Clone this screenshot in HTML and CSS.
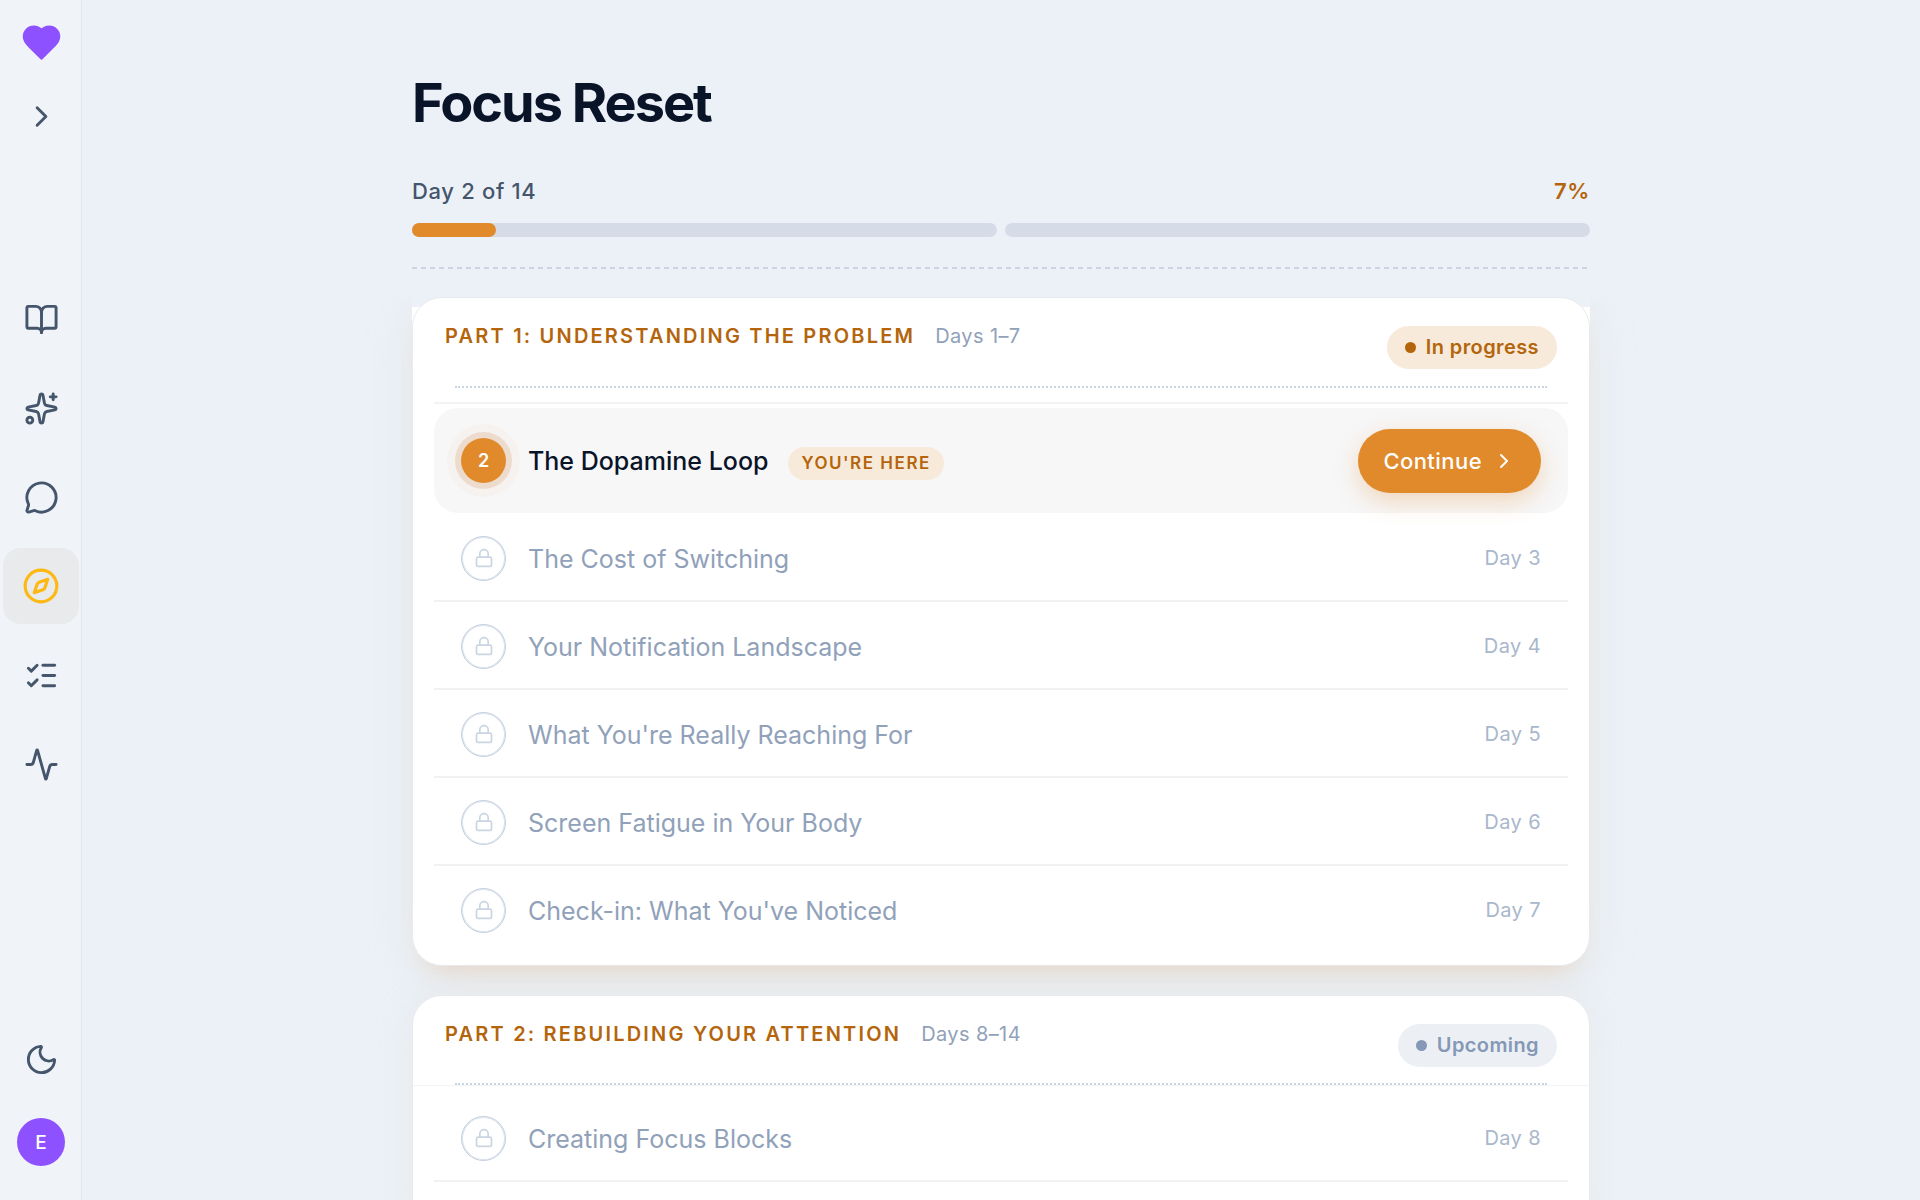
FILE: index.html
```html
<!DOCTYPE html>
<html lang="en">
<head>
  <meta charset="UTF-8">
  <meta name="viewport" content="width=device-width, initial-scale=1.0">
  <title>Focus Reset</title>
  <link rel="stylesheet" href="styles.css">
</head>
<body>

  <svg class="sprite" aria-hidden="true">
    <symbol id="lock" viewBox="0 0 24 24">
      <rect x="3" y="11" width="18" height="11" rx="2"/>
      <path d="M7 11V7a5 5 0 0 1 10 0v4"/>
    </symbol>
    <symbol id="chevron" viewBox="0 0 24 24">
      <path d="m9 18 6-6-6-6"/>
    </symbol>
  </svg>

  <aside class="sidebar">
    <a href="#" class="logo" aria-label="Home">
      <svg class="icon" viewBox="0 0 24 24"><path d="M19 14c1.49-1.46 3-3.21 3-5.5A5.5 5.5 0 0 0 16.5 3c-1.76 0-3 .5-4.5 2-1.5-1.5-2.74-2-4.5-2A5.5 5.5 0 0 0 2 8.5c0 2.3 1.5 4.05 3 5.5l7 7Z"/></svg>
    </a>
    <button class="expand" type="button" aria-label="Expand sidebar">
      <svg class="icon"><use href="#chevron"/></svg>
    </button>

    <nav>
      <a href="#" aria-label="Library">
        <svg class="icon" viewBox="0 0 24 24"><path d="M12 7v14"/><path d="M3 18a1 1 0 0 1-1-1V4a1 1 0 0 1 1-1h5a4 4 0 0 1 4 4 4 4 0 0 1 4-4h5a1 1 0 0 1 1 1v13a1 1 0 0 1-1 1h-6a3 3 0 0 0-3 3 3 3 0 0 0-3-3z"/></svg>
      </a>
      <a href="#" aria-label="Discover">
        <svg class="icon" viewBox="0 0 24 24"><path d="M11.017 2.814a1 1 0 0 1 1.966 0l1.051 5.558a2 2 0 0 0 1.594 1.594l5.558 1.051a1 1 0 0 1 0 1.966l-5.558 1.051a2 2 0 0 0-1.594 1.594l-1.051 5.558a1 1 0 0 1-1.966 0l-1.051-5.558a2 2 0 0 0-1.594-1.594l-5.558-1.051a1 1 0 0 1 0-1.966l5.558-1.051a2 2 0 0 0 1.594-1.594z"/><path d="M20 2v4"/><path d="M22 4h-4"/><circle cx="4" cy="20" r="2"/></svg>
      </a>
      <a href="#" aria-label="Chat">
        <svg class="icon" viewBox="0 0 24 24"><path d="M2.992 16.342a2 2 0 0 1 .094 1.167l-1.065 3.29a1 1 0 0 0 1.236 1.168l3.413-.998a2 2 0 0 1 1.099.092 10 10 0 1 0-4.777-4.719"/></svg>
      </a>
      <a href="#" class="active" aria-label="Programs" aria-current="page">
        <svg class="icon" viewBox="0 0 24 24"><circle cx="12" cy="12" r="10"/><path d="m16.24 7.76-1.804 5.411a2 2 0 0 1-1.265 1.265L7.76 16.24l1.804-5.411a2 2 0 0 1 1.265-1.265z"/></svg>
      </a>
      <a href="#" aria-label="Tasks">
        <svg class="icon" viewBox="0 0 24 24"><path d="M13 5h8"/><path d="M13 12h8"/><path d="M13 19h8"/><path d="m3 17 2 2 4-4"/><path d="m3 7 2 2 4-4"/></svg>
      </a>
      <a href="#" aria-label="Activity">
        <svg class="icon" viewBox="0 0 24 24"><path d="M22 12h-2.48a2 2 0 0 0-1.93 1.46l-2.35 8.36a.25.25 0 0 1-.48 0L9.24 2.18a.25.25 0 0 0-.48 0l-2.35 8.36A2 2 0 0 1 4.49 12H2"/></svg>
      </a>
    </nav>

    <button class="theme" type="button" aria-label="Dark mode">
      <svg class="icon" viewBox="0 0 24 24"><path d="M20.985 12.486a9 9 0 1 1-9.473-9.472c.405-.022.617.46.402.803a6 6 0 0 0 8.268 8.268c.344-.215.825-.004.803.401"/></svg>
    </button>
    <button class="avatar" type="button">E</button>
  </aside>

  <main>
    <div class="content">
      <h1>Focus Reset</h1>

      <div class="progress-label">
        <span>Day 2 of 14</span>
        <span class="percent">7%</span>
      </div>
      <div class="progress">
        <div class="track"><div class="fill" style="width: 14.28%"></div></div>
        <div class="track"></div>
      </div>

      <div class="divider"></div>

      <section class="part current">
        <div class="panel">
          <header>
            <h2>Part 1: Understanding the Problem</h2>
            <span class="range">Days 1–7</span>
            <span class="status">In progress</span>
          </header>
          <ol>
            <li class="today">
              <div class="lesson">
                <span class="marker">2</span>
                <span class="name">The Dopamine Loop</span>
                <span class="here">You're here</span>
                <button class="continue" type="button">Continue <svg class="icon"><use href="#chevron"/></svg></button>
              </div>
            </li>
            <li class="locked">
              <span class="marker"><svg class="icon"><use href="#lock"/></svg></span>
              <span class="name">The Cost of Switching</span>
              <span class="day">Day 3</span>
            </li>
            <li class="locked">
              <span class="marker"><svg class="icon"><use href="#lock"/></svg></span>
              <span class="name">Your Notification Landscape</span>
              <span class="day">Day 4</span>
            </li>
            <li class="locked">
              <span class="marker"><svg class="icon"><use href="#lock"/></svg></span>
              <span class="name">What You're Really Reaching For</span>
              <span class="day">Day 5</span>
            </li>
            <li class="locked">
              <span class="marker"><svg class="icon"><use href="#lock"/></svg></span>
              <span class="name">Screen Fatigue in Your Body</span>
              <span class="day">Day 6</span>
            </li>
            <li class="locked">
              <span class="marker"><svg class="icon"><use href="#lock"/></svg></span>
              <span class="name">Check-in: What You've Noticed</span>
              <span class="day">Day 7</span>
            </li>
          </ol>
        </div>
      </section>

      <section class="part upcoming">
        <div class="panel">
          <header>
            <h2>Part 2: Rebuilding Your Attention</h2>
            <span class="range">Days 8–14</span>
            <span class="status">Upcoming</span>
          </header>
          <ol>
            <li class="locked">
              <span class="marker"><svg class="icon"><use href="#lock"/></svg></span>
              <span class="name">Creating Focus Blocks</span>
              <span class="day">Day 8</span>
            </li>
          </ol>
        </div>
      </section>
    </div>
  </main>

</body>
</html>
```
FILE: styles.css
```css
* {
  box-sizing: border-box;
}
body {
  margin: 0;
  height: 100vh;
  display: flex;
  overflow: hidden;
  background: #ecf1f8;
  color: #0a1428;
  font-family: Inter, "Liberation Sans", sans-serif;
}
h1, h2, ol {
  margin: 0;
  padding: 0;
}
button {
  border: none;
  padding: 0;
  background: none;
  color: inherit;
  font-family: inherit;
  cursor: pointer;
}
.sprite {
  display: none;
}
.icon {
  display: block;
  fill: none;
  stroke: currentColor;
  stroke-width: 2;
  stroke-linecap: round;
  stroke-linejoin: round;
}

/* sidebar */
.sidebar {
  width: 82px;
  flex-shrink: 0;
  display: flex;
  flex-direction: column;
  align-items: center;
  padding: 22px 0 34px 1px;
  background: #f0f4f8;
  border-right: 1px solid #e3e5e8;
  color: #45556c;
}
.sidebar .icon {
  width: 35px;
  height: 35px;
}
.sidebar .logo .icon {
  width: 41px;
  height: 41px;
  fill: #8e51ff;
  color: #8e51ff;
}
.expand {
  margin-top: 36px;
}
nav {
  display: flex;
  flex-direction: column;
  gap: 13px;
  margin-top: 147px;
}
nav a {
  width: 76px;
  height: 76px;
  display: flex;
  align-items: center;
  justify-content: center;
  border-radius: 18px;
  color: inherit;
}
nav a.active {
  background: #e8eaec;
  color: #fdb813;
}
.sidebar nav a.active .icon {
  width: 38px;
  height: 38px;
}
.theme {
  margin-top: auto;
}
.avatar {
  width: 48px;
  height: 48px;
  margin-top: 41px;
  border-radius: 50%;
  background: #8e51ff;
  color: #fff;
  font-size: 19px;
  font-weight: 500;
}

/* page */
main {
  flex: 1;
  padding: 70px 40px 0;
}
.content {
  max-width: 1178px;
  margin: 0 auto;
}
h1 {
  font-size: 54px;
  line-height: 66px;
  font-weight: 700;
  letter-spacing: -2px;
}
.progress-label {
  display: flex;
  justify-content: space-between;
  margin-top: 41px;
  font-size: 22px;
  line-height: 28px;
  font-weight: 500;
  letter-spacing: 0.03em;
  color: #45556c;
}
.percent {
  font-weight: 600;
  color: #b4650c;
}
.progress {
  display: flex;
  gap: 8px;
  margin-top: 18px;
}
.track {
  flex: 1;
  height: 14px;
  border-radius: 7px;
  background: #d6dce7;
}
.fill {
  height: 100%;
  border-radius: 7px;
  background: #e08a2b;
}
.divider {
  height: 2px;
  margin: 30px 0 28px;
  background: repeating-linear-gradient(90deg, #ccd4e2 0 5px, transparent 5px 9px);
}

/* parts */
.part {
  position: relative;
  margin-bottom: 29px;
  border-radius: 30px;
  box-shadow: 0 2px 40px rgba(205, 200, 160, 0.16);
}
.part.current {
  box-shadow: 0 16px 24px -16px rgba(230, 130, 60, 0.26), 0 8px 48px rgba(208, 195, 165, 0.22);
  clip-path: inset(0 -80px -80px);
}
/* backdrop that squares off the top corners of the current part */
.part.current::before {
  content: "";
  position: absolute;
  inset: 0 0 auto;
  height: 40px;
  background: linear-gradient(#ecf1f8 10px, #fff 10px);
}
.panel {
  position: relative;
  background: #fff;
  border: 1px solid #e9eaec;
  border-radius: 30px;
}
.panel header {
  position: relative;
  display: flex;
  align-items: flex-start;
  height: 90px;
  padding: 26px 32px 0;
}
.panel header::after {
  content: "";
  position: absolute;
  left: 42px;
  right: 42px;
  bottom: 0;
  border-bottom: 2px dotted #cad5e2;
}
h2 {
  font-size: 20px;
  line-height: 24px;
  font-weight: 600;
  letter-spacing: 0.11em;
  text-transform: uppercase;
  color: #b4650c;
}
.range {
  margin-left: 20px;
  font-size: 20px;
  line-height: 24px;
  letter-spacing: 0.02em;
  color: #90a1b9;
}
.status {
  display: flex;
  align-items: center;
  gap: 10px;
  margin: 2px 0 0 auto;
  padding: 0 18px;
  border-radius: 22px;
  background: #f7eadb;
  color: #b4650c;
  font-size: 20px;
  line-height: 43px;
  font-weight: 600;
  letter-spacing: 0.02em;
}
.status::before {
  content: "";
  width: 11px;
  height: 11px;
  border-radius: 50%;
  background: currentColor;
}
.upcoming .panel header {
  border-bottom: 1px solid #f3f4f6;
}
.upcoming .status {
  background: #ecf0f5;
  color: #8598b5;
}
ol {
  list-style: none;
  padding: 0 21px 11px;
}
.current ol {
  padding-top: 14px;
}
.upcoming ol {
  padding: 8px 21px 60px;
}
.today {
  padding: 4px 0 1px;
  border-top: 2px solid #f3f3f4;
}
.lesson,
.locked {
  display: flex;
  align-items: center;
  padding: 0 27px;
}
.lesson {
  height: 105px;
  border-radius: 24px;
  background: #f7f7f8;
}
.locked {
  height: 88px;
  padding-top: 2px;
  border-bottom: 2px solid #f1f1f3;
}
.current .locked:last-child {
  border-color: transparent;
}
.marker {
  width: 45px;
  height: 45px;
  display: flex;
  align-items: center;
  justify-content: center;
  flex-shrink: 0;
  margin-right: 22px;
  border-radius: 50%;
}
.locked .marker {
  border: 1px solid #c3cfdf;
  box-shadow: inset 0 0 0 1px #dbe3ed;
  color: #cad5e2;
}
.locked .marker .icon {
  width: 20px;
  height: 20px;
}
.today .marker {
  background: #e08a2b;
  color: #fff;
  font-size: 18px;
  font-weight: 600;
  box-shadow: 0 0 0 6px #eddccd, 0 0 0 14px rgba(224, 138, 43, 0.04);
}
.name {
  font-size: 25px;
  line-height: 32px;
  color: #90a1b9;
}
.locked .name {
  padding-top: 2px;
}
.today .name {
  font-weight: 500;
  color: #0a1428;
}
.here {
  margin: 6px 0 0 20px;
  padding: 0 13px;
  border-radius: 17px;
  background: #f7eadb;
  color: #b4650c;
  font-size: 17px;
  line-height: 33px;
  font-weight: 600;
  letter-spacing: 0.09em;
  text-transform: uppercase;
}
.day {
  margin-left: auto;
  font-size: 20px;
  line-height: 28px;
  letter-spacing: 0.02em;
  color: #a9b7cc;
}
.continue {
  display: flex;
  align-items: center;
  gap: 10px;
  height: 64px;
  margin-left: auto;
  padding: 0 25px;
  border-radius: 32px;
  background: #e08a2b;
  color: #fff;
  font-size: 22px;
  font-weight: 500;
  letter-spacing: 0.02em;
  box-shadow: 0 8px 24px rgba(224, 138, 43, 0.3);
}
.continue .icon {
  width: 24px;
  height: 24px;
}
```
